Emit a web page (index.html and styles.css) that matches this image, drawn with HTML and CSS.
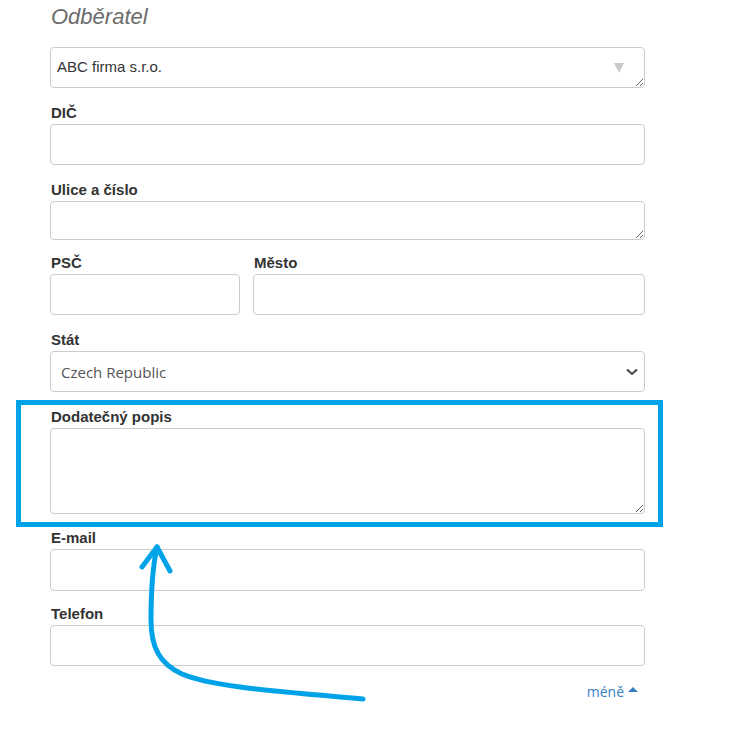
FILE: index.html
```html
<!DOCTYPE html>
<html lang="cs">
<head>
<meta charset="utf-8">
<title>Odběratel</title>
<link rel="stylesheet" href="styles.css">
</head>
<body>
<div class="page">
  <form class="form">
    <h2 class="title">Odběratel</h2>

    <div class="group first">
      <div class="combo">
        <textarea class="field combo-field" rows="1">ABC firma s.r.o.</textarea>
        <span class="combo-tri"></span>
      </div>
    </div>

    <div class="group g16">
      <label class="lbl">DIČ</label>
      <div class="field input"></div>
    </div>

    <div class="group g16">
      <label class="lbl">Ulice a číslo</label>
      <textarea class="field area-small"></textarea>
    </div>

    <div class="group g14 row">
      <div class="col">
        <label class="lbl">PSČ</label>
        <div class="field input"></div>
      </div>
      <div class="col">
        <label class="lbl">Město</label>
        <div class="field input"></div>
      </div>
    </div>

    <div class="group g16">
      <label class="lbl">Stát</label>
      <div class="field select">
        <span class="select-text">Czech Republic</span>
        <svg class="chev" width="12" height="8" viewBox="0 0 12 8"><path d="M1 1.5 L6 6 L11 1.5" fill="none" stroke="#444" stroke-width="2"/></svg>
      </div>
    </div>

    <div class="group g16">
      <label class="lbl">Dodatečný popis</label>
      <textarea class="field area-big"></textarea>
    </div>

    <div class="group g15">
      <label class="lbl">E-mail</label>
      <div class="field input tall"></div>
    </div>

    <div class="group g14">
      <label class="lbl">Telefon</label>
      <div class="field input"></div>
    </div>

    <div class="more-row">
      <a class="more" href="#">méně <span class="caret-up"></span></a>
    </div>
  </form>

  <div class="highlight"></div>
  <svg class="arrow" width="745" height="741" viewBox="0 0 745 741">
    <path d="M363 699 C 290 692, 215 688, 182 674 C 160 664, 151 648, 151 620 C 151 595, 153 565, 157 547" fill="none" stroke="#00a2e8" stroke-width="5" stroke-linecap="round" stroke-linejoin="round"/>
    <path d="M142 567 L157 547 L170 571" fill="none" stroke="#00a2e8" stroke-width="5" stroke-linecap="round" stroke-linejoin="round"/>
  </svg>
</div>
</body>
</html>
```

FILE: styles.css
```css
* { box-sizing: border-box; }
html, body { margin: 0; padding: 0; background: #fff; }
body { font-family: "Liberation Sans", Arial, sans-serif; color: #333; }

.page { position: relative; width: 745px; height: 741px; overflow: hidden; }

.form { width: 595px; margin-left: 50px; padding-top: 4px; }

.title {
  margin: 0 0 17px 1px;
  font-size: 22px;
  line-height: 26px;
  font-style: italic;
  font-weight: normal;
  color: #6b6b6b;
}

.group.g16 { margin-top: 16px; }
.group.g15 { margin-top: 15px; }
.group.g14 { margin-top: 14px; }

.lbl {
  display: block;
  font-size: 15px;
  font-weight: bold;
  line-height: 17px;
  margin: 0 0 3px 1px;
  color: #333;
}

.field {
  display: block;
  width: 100%;
  border: 1px solid #ccc;
  border-radius: 4px;
  background: #fff;
  margin: 0;
}

.input { height: 41px; }
.input.tall { height: 42px; }

textarea.field {
  font-family: "Liberation Sans", Arial, sans-serif;
  resize: vertical;
  outline: none;
}

.area-small { height: 39px; }
.area-big { height: 86px; }

.combo { position: relative; }
.combo-field {
  height: 41px;
  padding: 10px 40px 0 6px;
  font-size: 15px;
  line-height: 18px;
  color: #333;
  overflow: hidden;
}
.combo-tri {
  position: absolute;
  right: 21px;
  top: 16px;
  width: 0;
  height: 0;
  border-left: 5.5px solid transparent;
  border-right: 5.5px solid transparent;
  border-top: 10px solid #c9c9c9;
}

.row { display: grid; grid-template-columns: 190px 1fr; column-gap: 13px; }

.select {
  height: 41px;
  display: flex;
  align-items: center;
  justify-content: space-between;
  padding: 0 6px 0 10px;
}
.select-text {
  font-family: "Open Sans", "Noto Sans", sans-serif;
  font-size: 15px;
  color: #555;
}
.chev { display: block; margin-top: 1px; }

.more-row { display: flex; justify-content: flex-end; margin-top: 16px; padding-right: 7px; }
.more {
  font-family: "Open Sans", "Noto Sans", sans-serif;
  font-size: 14px;
  line-height: 20px;
  color: #3a7fc1;
  text-decoration: none;
  display: flex;
  align-items: center;
  gap: 4px;
}
.caret-up {
  display: inline-block;
  width: 0;
  height: 0;
  border-left: 5px solid transparent;
  border-right: 5px solid transparent;
  border-bottom: 5px solid #3a7fc1;
  margin-top: -6px;
}

.highlight {
  position: absolute;
  left: 16px;
  top: 400px;
  width: 647px;
  height: 127px;
  border: 5px solid #00a2e8;
  pointer-events: none;
}

.arrow { position: absolute; left: 0; top: 0; pointer-events: none; }
```
